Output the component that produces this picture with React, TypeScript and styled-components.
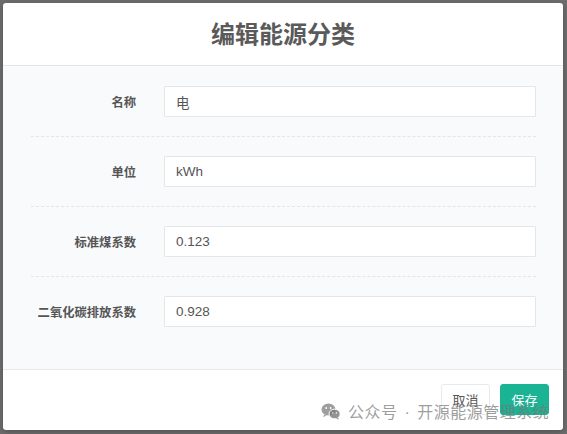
import React from "react";
import styled, { createGlobalStyle } from "styled-components";

const Global = createGlobalStyle`
  html, body { margin: 0; padding: 0; }
  body {
    font-family: "Liberation Sans", "Noto Sans CJK SC", sans-serif;
    background: #6d6d6d;
  }
  * { box-sizing: border-box; }
`;

const Backdrop = styled.div`
  width: 567px;
  height: 434px;
  padding: 3px 4px 4px 3px;
  background: #6d6d6d;
`;

const Modal = styled.div`
  position: relative;
  width: 560px;
  height: 427px;
  background: #fff;
  border-radius: 3px;
  display: flex;
  flex-direction: column;
  overflow: hidden;
  box-shadow: 0 2px 6px rgba(0, 0, 0, 0.25);
`;

const Header = styled.div`
  height: 63px;
  display: flex;
  align-items: center;
  justify-content: center;
  padding-bottom: 3px;
  border-bottom: 1px solid #e5e5e5;
  flex: none;
`;

const Title = styled.h4`
  margin: 0;
  font-family: "Noto Sans CJK SC", sans-serif;
  font-size: 24px;
  font-weight: 700;
  color: #5a5a5a;
`;

const Body = styled.div`
  flex: none;
  height: 304px;
  background: #f8fafb;
  padding: 20px 27px 0 28px;
  border-bottom: 1px solid #e7eaec;
`;

const Row = styled.div`
  display: grid;
  grid-template-columns: 105px 1fr;
  column-gap: 28px;
  align-items: center;
`;

const Label = styled.label`
  text-align: right;
  font-family: "Noto Sans CJK SC", sans-serif;
  font-size: 12.3px;
  font-weight: 700;
  color: #555;
`;

const Input = styled.input`
  height: 31px;
  width: 100%;
  border: 1px solid #e5e6e7;
  border-radius: 1px;
  background: #fff;
  padding: 0 11px;
  font-family: "Liberation Sans", "Noto Sans CJK SC", sans-serif;
  font-size: 13.5px;
  color: #555;
  outline: none;
`;

const Dashed = styled.div`
  border-top: 1px dashed #e3e6e8;
  margin: 19px 0;
`;

const Footer = styled.div`
  flex: 1;
  display: flex;
  justify-content: flex-end;
  align-items: flex-start;
  gap: 10px;
  padding: 14px 14px 0 0;
`;

const Button = styled.button<{ $primary?: boolean }>`
  width: 49px;
  height: 31px;
  border-radius: 3px;
  font-family: "Noto Sans CJK SC", sans-serif;
  font-size: 13px;
  border: 1px solid ${(p) => (p.$primary ? "#1ab394" : "#e7eaec")};
  background: ${(p) => (p.$primary ? "#1ab394" : "#fff")};
  color: ${(p) => (p.$primary ? "#fff" : "#555")};
  padding: 0;
`;

const Watermark = styled.div`
  position: absolute;
  left: 318px;
  top: 396px;
  display: flex;
  align-items: center;
  gap: 7px;
  font-family: "Noto Sans CJK SC", sans-serif;
  font-size: 16px;
  letter-spacing: 0.5px;
  color: rgba(120, 120, 120, 0.72);
  pointer-events: none;
  white-space: nowrap;
`;

const Sep = styled.span`
  font-family: "Liberation Sans", sans-serif;
  padding: 0 2px;
`;

const fields = [
  { label: "名称", value: "电" },
  { label: "单位", value: "kWh" },
  { label: "标准煤系数", value: "0.123" },
  { label: "二氧化碳排放系数", value: "0.928" },
];

function WeChatMark() {
  return (
    <svg width="20" height="17" viewBox="0 0 20 17" aria-hidden>
      <ellipse cx="7.5" cy="6.5" rx="7" ry="6" fill="rgba(120,120,120,0.72)" />
      <path d="M3 11.5 L2.4 14.2 L5.6 12.3 Z" fill="rgba(120,120,120,0.72)" />
      <ellipse cx="13.6" cy="11" rx="5.6" ry="4.8" fill="rgba(120,120,120,0.8)" stroke="#fff" strokeWidth="1" />
      <path d="M17 14.6 L17.8 16.6 L15.2 15.4 Z" fill="rgba(120,120,120,0.8)" />
      <circle cx="5.2" cy="5" r="0.9" fill="#fff" />
      <circle cx="9.6" cy="5" r="0.9" fill="#fff" />
      <circle cx="11.8" cy="10" r="0.7" fill="#fff" />
      <circle cx="15.4" cy="10" r="0.7" fill="#fff" />
    </svg>
  );
}

export default function App() {
  return (
    <>
      <Global />
      <Backdrop>
        <Modal>
          <Header>
            <Title>编辑能源分类</Title>
          </Header>
          <Body>
            {fields.map((f, i) => (
              <React.Fragment key={f.label}>
                <Row>
                  <Label>{f.label}</Label>
                  <Input defaultValue={f.value} />
                </Row>
                {i < fields.length - 1 && <Dashed />}
              </React.Fragment>
            ))}
          </Body>
          <Footer>
            <Button>取消</Button>
            <Button $primary>保存</Button>
          </Footer>
          <Watermark>
            <WeChatMark />
            <span>
              公众号<Sep> · </Sep>开源能源管理系统
            </span>
          </Watermark>
        </Modal>
      </Backdrop>
    </>
  );
}
